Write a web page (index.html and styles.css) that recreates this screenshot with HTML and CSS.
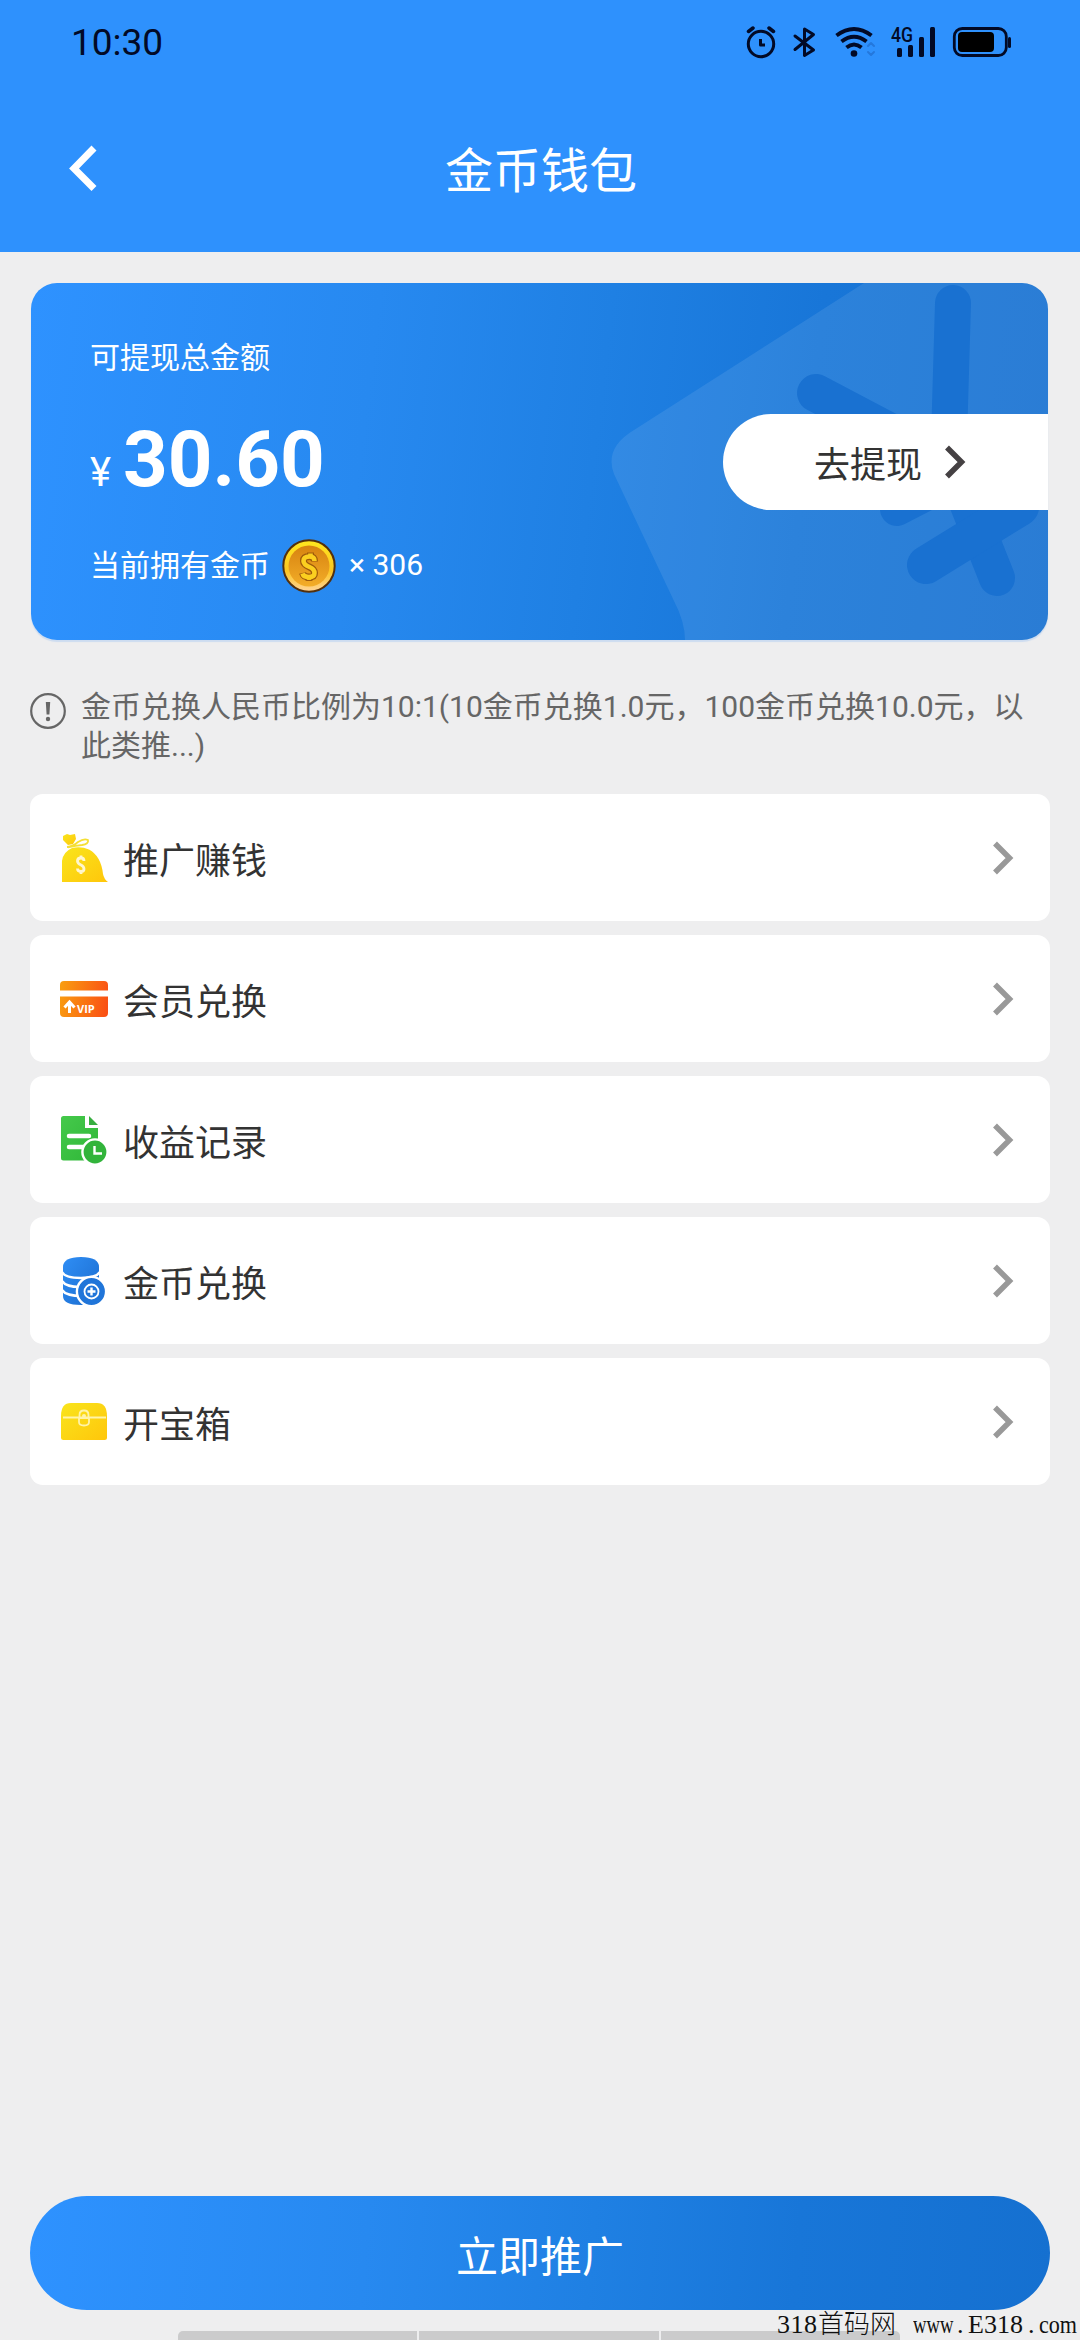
FILE: index.html
```html
<!DOCTYPE html>
<html lang="zh-CN">
<head>
<meta charset="utf-8">
<title>金币钱包</title>
<link rel="stylesheet" href="styles.css">
</head>
<body>
<div class="screen">
  <header class="header">
    <div class="status">
      <span class="time">10:30</span>
      <svg class="status-icons" width="268" height="36" viewBox="744 24 268 36" fill="none" stroke="#020a26" stroke-width="3" stroke-linecap="round" stroke-linejoin="round">
        <circle cx="761" cy="44" r="12.7"/>
        <path d="M748.5 31.5l4.5-3.5M773.500 31.500l-4.500-3.500" stroke-width="3.500"/>
        <path d="M760.500 39v6h4.500" stroke-linecap="butt"/>
        <path d="M795 36l18.500 14-9 5.500V29l9 5.500L795 49.500"/>
        <g stroke-width="4" stroke-linecap="butt">
          <path d="M836.500 35.500Q854 22.500 871.500 35.500"/>
          <path d="M841.500 41.500Q854 32 866.500 41.500"/>
          <path d="M846.500 47.500Q854 41.500 861.500 47.500"/>
        </g>
        <path d="M868 46l3-3 3 3M868 52l3 3 3-3" stroke="#2478dc" stroke-width="2"/>
        <g fill="#020a26" stroke="none">
          <circle cx="854" cy="53.500" r="3.300"/>
          <rect x="897" y="48" width="5" height="9" rx="1.500"/>
          <rect x="908" y="45" width="5" height="12" rx="1.500"/>
          <rect x="919" y="37" width="5" height="20" rx="1.500"/>
          <rect x="930" y="27" width="5" height="30" rx="1.500"/>
          <rect x="958" y="32" width="36" height="20" rx="4" fill="#000"/>
          <rect x="1008" y="37" width="3" height="11" rx="1.500"/>
          <text class="net" x="891" y="41.500" textLength="22" lengthAdjust="spacingAndGlyphs">4G</text>
        </g>
        <rect x="954.300" y="28.500" width="52" height="27" rx="8" stroke-width="2.800"/>
      </svg>
    </div>
    <div class="nav">
      <svg class="back" width="30" height="48" viewBox="0 0 30 48" fill="none" stroke="#fff" stroke-width="7"><path d="M26 4L6 24.500l20 20"/></svg>
      <h1 class="title">金币钱包</h1>
    </div>
  </header>

  <main class="content">
    <section class="wallet">
      <svg class="pattern" width="1017" height="357" viewBox="31 283 1017 357">
        <path d="M864 283L634 430Q604 448 614 474L674 601Q685 622 685 640H1048V283Z" fill="#fff" fill-opacity=".09"/>
        <g fill="none" stroke="#1971d1" stroke-width="36" stroke-linecap="round" stroke-linejoin="round">
          <path d="M953 303L949 440 966 500 997 578"/>
          <path d="M816 393L962 470" stroke-width="38"/>
          <path d="M897 509L1030 440" stroke-width="34"/>
          <path d="M926 565L1020 507" stroke-width="38"/>
        </g>
      </svg>
      <div class="balance">
        <p class="label">可提现总金额</p>
        <p class="amount"><span class="currency">¥</span>30.60</p>
        <p class="coins"><span>当前拥有金币</span>
          <svg width="54" height="54" viewBox="0 0 54 54">
            <defs>
              <linearGradient id="coinRim" x1="0" y1="0" x2="0" y2="1"><stop offset="0" stop-color="#ffe81e"/><stop offset=".6" stop-color="#fcc522"/><stop offset="1" stop-color="#ffd49a"/></linearGradient>
              <linearGradient id="coinFace" x1="0" y1="0" x2="0" y2="1"><stop offset="0" stop-color="#d78310"/><stop offset="1" stop-color="#f3ad28"/></linearGradient>
            </defs>
            <circle cx="27" cy="27" r="25.700" fill="url(#coinRim)" stroke="#54300c" stroke-width="2"/>
            <circle cx="27" cy="27" r="20.500" fill="url(#coinFace)"/>
            <path d="M32.500 22.500Q32.500 17.500 27.500 17.500 21.500 17.500 21.500 22 21.500 25.500 27.500 28 32.500 30 32.500 34 32.500 38 27 38 21.500 38 20.500 34M28.500 13.500V17M27 38V42" fill="none" stroke="#9d5a0b" stroke-width="7" stroke-linejoin="round"/>
            <path d="M32.500 22Q32.500 17.500 27.500 17.500 21.500 17.500 21.500 22 21.500 25.500 27.500 28 32.500 30 32.500 34 32.500 38 27 38 21.500 38 20.500 34.500M28.500 14.500V17M27 38V41" fill="none" stroke="#fbcf20" stroke-width="4.600" stroke-linejoin="round"/>
          </svg>
          <span class="count">× 306</span>
        </p>
      </div>
      <a class="withdraw">去提现
        <svg width="22" height="34" viewBox="0 0 22 34" fill="none" stroke="#454143" stroke-width="5.500"><path d="M3 2.500L17.500 17 3 31.500"/></svg>
      </a>
    </section>

    <section class="notice">
      <svg width="36" height="36" viewBox="0 0 36 36"><circle cx="18" cy="18" r="16.800" fill="none" stroke="#666" stroke-width="2.200"/><path d="M15.800 9h4.400l-.8 12.500h-2.800z" fill="#666"/><circle cx="18" cy="26" r="2.200" fill="#666"/></svg>
      <p>金币兑换人民币比例为10:1(10金币兑换1.0元，100金币兑换10.0元，以此类推...)</p>
    </section>

    <nav class="menu">
      <a class="item">
        <svg width="48" height="48" viewBox="0 0 48 48">
          <defs><linearGradient id="gold" x1="0" y1="0" x2="1" y2="1"><stop offset="0" stop-color="#f9e51c"/><stop offset="1" stop-color="#ffc60b"/></linearGradient></defs>
          <path d="M3 2L7 0 10 1 15 0 16 5 13 10 8 11 3 6Z" fill="url(#gold)"/>
          <path d="M7 13Q13 12.500 18 8 24 4 28 6 29 10 22 11 16 11.500 8 13.500" fill="none" stroke="#f5df35" stroke-width="1.800"/>
          <path d="M12 14Q21 12 29 15.500 41 22 43 40 44 45 48 48H2V27Q3 18 12 14Z" fill="url(#gold)"/>
          <path d="M24 27Q24 24 21 24 17.500 24 17.500 27 17.500 29.500 21 31 24 32.500 24 35 24 37.500 21 37.500 17.500 37.500 17.500 34.500M21 21.500v3M21 37v3" fill="none" stroke="#fff6ce" stroke-width="2.800"/>
        </svg>
        <span>推广赚钱</span>
        <svg class="arrow" width="22" height="34" viewBox="0 0 22 34"><path d="M3 2.500L17.500 17 3 31.500"/></svg>
      </a>
      <a class="item">
        <svg width="48" height="48" viewBox="0 0 48 48">
          <defs><linearGradient id="orange" gradientUnits="userSpaceOnUse" x1="0" y1="20" x2="48" y2="28"><stop offset="0" stop-color="#f99b10"/><stop offset="1" stop-color="#fa5014"/></linearGradient></defs>
          <path d="M0 15.500V10Q0 6 4 6H44Q48 6 48 10V15.500ZM0 21.500H48V38Q48 42 44 42H4Q0 42 0 38Z" fill="url(#orange)"/>
          <path d="M9.500 38V29M4.500 32.500L9.500 27l5 5.500" fill="none" stroke="#fff" stroke-width="3"/>
          <text class="vip" x="17" y="38">VIP</text>
        </svg>
        <span>会员兑换</span>
        <svg class="arrow" width="22" height="34" viewBox="0 0 22 34"><path d="M3 2.500L17.500 17 3 31.500"/></svg>
      </a>
      <a class="item">
        <svg width="48" height="48" viewBox="0 0 48 48">
          <defs><linearGradient id="green" x1="0" y1="0" x2="1" y2="1"><stop offset="0" stop-color="#45c94b"/><stop offset="1" stop-color="#2fb738"/></linearGradient></defs>
          <path d="M3.500 0H25V12H38V44.500H3.500Q1 44.500 1 42V2.500Q1 0 3.500 0Z" fill="url(#green)"/>
          <path d="M29 0L38 9H29Z" fill="#37ae40"/>
          <path d="M9 20H29M9 31H24" stroke="#fff" stroke-width="4.500" stroke-linecap="round"/>
          <circle cx="35" cy="36" r="12.600" fill="#32b43b" stroke="#fff" stroke-width="2.400"/>
          <path d="M34.500 30V37.500H42" fill="none" stroke="#fff" stroke-width="2.400"/>
        </svg>
        <span>收益记录</span>
        <svg class="arrow" width="22" height="34" viewBox="0 0 22 34"><path d="M3 2.500L17.500 17 3 31.500"/></svg>
      </a>
      <a class="item">
        <svg width="48" height="48" viewBox="0 0 48 48">
          <defs><linearGradient id="blue" x1="0" y1="0" x2="1" y2="1"><stop offset="0" stop-color="#2f8ef5"/><stop offset="1" stop-color="#1a6bcd"/></linearGradient></defs>
          <path d="M3 10Q3 0 21 0 39 0 39 10V39Q39 48 21 48 3 48 3 39Z" fill="url(#blue)"/>
          <path d="M2 15Q5 21 21 21 36 21 40 15M2 24Q6 30 20 30 30 30 36 27M2 33Q6 39 22 39" fill="none" stroke="#fff" stroke-width="2.400"/>
          <circle cx="31.500" cy="34.500" r="14.600" fill="#2075d9" stroke="#fff" stroke-width="2.400"/>
          <circle cx="31.500" cy="34.500" r="7" fill="none" stroke="#fff" stroke-width="1.800"/>
          <path d="M27.500 34.500H35.500M31.500 30.500V38.500" stroke="#fff" stroke-width="2.400"/>
        </svg>
        <span>金币兑换</span>
        <svg class="arrow" width="22" height="34" viewBox="0 0 22 34"><path d="M3 2.500L17.500 17 3 31.500"/></svg>
      </a>
      <a class="item">
        <svg width="48" height="48" viewBox="0 0 48 48">
          <path d="M1 18Q1 5 11 5H37Q47 5 47 18V39.500Q47 42 44.500 42H3.500Q1 42 1 39.500Z" fill="url(#gold)"/>
          <path d="M3 19.500H46M19.500 20V17Q19.500 12.500 24 12.500 28.500 12.500 28.500 17V20M19 20H29V24Q29 27.500 24 27.500 19 27.500 19 24Z" fill="none" stroke="#fff3a8" stroke-width="1.800"/>
          <circle cx="24" cy="18" r="2" fill="#fff3a8"/>
        </svg>
        <span>开宝箱</span>
        <svg class="arrow" width="22" height="34" viewBox="0 0 22 34"><path d="M3 2.500L17.500 17 3 31.500"/></svg>
      </a>
    </nav>
  </main>

  <button class="promote">立即推广</button>
  <div class="tabs"><i></i><i></i><i></i></div>
  <div class="watermark"><span class="w3">318</span><span class="site">首码网</span><span class="w3 www">www</span><span class="w1">.</span><span class="w4">E318</span><span class="w1">.</span><span class="w3 com">com</span></div>
</div>
</body>
</html>
```

FILE: styles.css
```css
* { box-sizing: border-box; }
body { margin: 0; }
h1, p { margin: 0; font-weight: 400; }
svg { display: block; flex: none; }

.screen {
  position: relative;
  display: flex;
  flex-direction: column;
  width: 1080px;
  height: 2340px;
  overflow: hidden;
  background: #eeeeef;
  color: #333;
  font-family: Roboto, "Noto Sans CJK SC", sans-serif;
}

.header { height: 252px; background: #2e91fd; }
.status {
  display: flex;
  justify-content: space-between;
  align-items: center;
  height: 84px;
  padding: 0 68px 0 71px;
}
.time { font-size: 37px; color: #020a26; }
.net { font: 500 20px Roboto, sans-serif; }
.nav {
  display: grid;
  grid-template-columns: 40px 1fr 40px;
  align-items: center;
  height: 168px;
  padding: 0 66px 0 68px;
}
.title { padding-top: 8px; color: #fff; font-size: 48px; line-height: 60px; text-align: center; }

.content { flex: 1; padding: 31px 30px 0; }

.wallet {
  position: relative;
  display: flex;
  justify-content: space-between;
  align-items: flex-start;
  width: 1017px;
  height: 357px;
  margin-left: 1px;
  border-radius: 26px;
  background: linear-gradient(97deg, #2e92ff, #2789f0 33%, #1f80e3 55%, #1876d8 75%, #1570d0);
  box-shadow: 0 2px 1px #cddcf0;
  color: #fff;
}
.pattern { position: absolute; inset: 0; border-radius: 26px; }
.balance { position: relative; padding: 53px 0 0 59px; }
.label { font-size: 30px; line-height: 44px; }
.amount { display: flex; align-items: baseline; margin-top: 34px; font-size: 78px; font-weight: 700; line-height: 92px; }
.currency { width: 33px; font-size: 40px; font-weight: 400; }
.coins { display: flex; align-items: center; margin-top: 35px; font-size: 30px; line-height: 54px; }
.amount + .coins { margin-top: 19px; }
.coins svg { margin: 0 13px 0 12px; }
.coins span:first-child { padding-top: 1px; }
.count { margin-top: -2px; }
.withdraw {
  position: relative;
  display: flex;
  align-items: center;
  gap: 22px;
  width: 325px;
  height: 96px;
  margin-top: 131px;
  padding: 0 0 0 91px;
  border-radius: 48px 0 0 48px;
  background: #fff;
  color: #333;
  font-size: 36px;
}

.notice { display: flex; gap: 15px; margin-top: 47px; color: #666; font-size: 30px; line-height: 39px; }
.notice svg { margin-top: 6px; }
.notice p { width: 950px; }

.menu { display: flex; flex-direction: column; gap: 14px; margin-top: 29px; }
.item {
  display: flex;
  align-items: center;
  height: 127px;
  padding: 0 36px 0 30px;
  border-radius: 13px;
  background: #fff;
  font-size: 36px;
}
.item span { flex: 1; padding: 1px 0 0 15px; }
.arrow { fill: none; stroke: #999; stroke-width: 5.5; }
.vip { fill: #fff; font: 700 11px "Open Sans", sans-serif; }

.promote {
  flex: none;
  height: 114px;
  margin: 0 30px 21px;
  padding: 1px 0 0;
  border: 0;
  border-radius: 57px;
  background: linear-gradient(95deg, #2e92ff, #2789f0 33%, #1f80e3 55%, #1876d8 75%, #1570d0);
  color: #fff;
  font: 42px Roboto, "Noto Sans CJK SC", sans-serif;
}
.tabs { display: flex; gap: 2px; width: 722px; height: 9px; margin-left: 178px; }
.tabs i { flex: 1; background: #cbcbcc; }
.tabs i:first-child { border-top-left-radius: 5px; }
.tabs i:last-child { border-top-right-radius: 5px; }

.watermark {
  position: absolute;
  right: 0;
  bottom: 0;
  display: flex;
  align-items: baseline;
  color: #111;
  font: 26px/30px "Liberation Serif", serif;
  white-space: nowrap;
}
.w1, .w3, .w4 { letter-spacing: 0.5px; }
.w1 { width: 14px; padding-left: 3px; }
.w3 { width: 41px; }
.w4 { width: 57px; letter-spacing: 0; }
.site { width: 95px; font: 300 26px/30px "Noto Sans CJK SC", sans-serif; }
.www { transform: scaleX(.72); transform-origin: left; letter-spacing: 0; }
.com { transform: scaleX(.85); transform-origin: left; letter-spacing: 0; }
```
